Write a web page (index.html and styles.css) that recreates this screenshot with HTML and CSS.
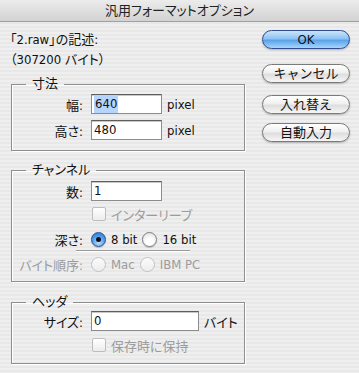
FILE: index.html
```html
<!DOCTYPE html>
<html lang="ja">
<head>
    <meta charset="UTF-8">
    <title>汎用フォーマットオプション</title>
    <link rel="stylesheet" href="styles.css">
</head>
<body>
    <div class="window">
        <div class="titlebar">汎用フォーマットオプション</div>

        <div class="content">
            <!-- left side: description and the three groups -->
            <div class="main">
                <p class="desc">「2.raw」の記述:<br>（307200 バイト）</p>

                <fieldset class="group group-size">
                    <legend>寸法</legend>
                    <div class="row">
                        <span class="label">幅:</span>
                        <span class="field field-short"><span class="selected">640</span></span>
                        <span class="unit">pixel</span>
                    </div>
                    <div class="row row-height">
                        <span class="label">高さ:</span>
                        <span class="field field-short">480</span>
                        <span class="unit">pixel</span>
                    </div>
                </fieldset>

                <fieldset class="group group-channel">
                    <legend>チャンネル</legend>
                    <div class="row">
                        <span class="label">数:</span>
                        <span class="field field-short">1</span>
                    </div>
                    <div class="row row-interleave disabled">
                        <span class="label"></span>
                        <span class="check"></span>
                        <span class="opt-text">インターリーブ</span>
                    </div>
                    <div class="row row-depth">
                        <span class="label">深さ:</span>
                        <span class="radio on"></span>
                        <span class="opt-text">8 bit</span>
                        <span class="radio"></span>
                        <span class="opt-text">16 bit</span>
                    </div>
                    <div class="separator"></div>
                    <div class="row row-order disabled">
                        <span class="label">バイト順序:</span>
                        <span class="radio"></span>
                        <span class="opt-text">Mac</span>
                        <span class="radio"></span>
                        <span class="opt-text">IBM PC</span>
                    </div>
                </fieldset>

                <fieldset class="group group-header">
                    <legend>ヘッダ</legend>
                    <div class="row">
                        <span class="label">サイズ:</span>
                        <span class="field field-long">0</span>
                        <span class="unit">バイト</span>
                    </div>
                    <div class="row row-keep disabled">
                        <span class="label"></span>
                        <span class="check"></span>
                        <span class="opt-text">保存時に保持</span>
                    </div>
                </fieldset>
            </div>

            <!-- right side: buttons -->
            <div class="buttons">
                <button class="aqua default">OK</button>
                <button class="aqua btn-cancel">キャンセル</button>
                <button class="aqua btn-swap">入れ替え</button>
                <button class="aqua btn-auto">自動入力</button>
            </div>
        </div>
    </div>
</body>
</html>
```

FILE: styles.css
```css
body {
    margin: 0;
    font-family: "DejaVu Sans Condensed", "DejaVu Sans", "Noto Sans CJK JP", sans-serif;
    font-size: 13px;
    font-feature-settings: "palt";
    color: #111;
}

.window {
    width: 359px;
    height: 373px;
    overflow: hidden;
    background: repeating-linear-gradient(#efefef 0, #efefef 2px, #e8e8e8 2px, #e8e8e8 4px);
}

.titlebar {
    height: 21px;
    line-height: 21px;
    text-align: center;
    font-size: 13px;
    color: #222;
    background: linear-gradient(#ececec, #d2d2d2);
    border-bottom: 1px solid #a0a0a0;
}

.content {
    display: flex;
}

.main {
    width: 234px;
    padding-left: 11px;
}

.desc {
    margin: 8px 0 0;
    line-height: 20px;
    margin-left: -1px;
}

/* group boxes */
.group {
    margin: 6px 0 0;
    padding: 2px 0 10px;
    border: 1px solid #8e8e8e;
    box-shadow: inset 1px 1px 0 #fff, 1px 1px 0 #fff;
}

.group legend {
    margin-left: 14px;
    padding: 0 6px;
    line-height: 16px;
    font-size: 13px;
}

.group-channel {
    margin-top: 11px;
    padding: 3px 0 7px;
}

.group-header {
    margin-top: 12px;
    padding: 1px 0 8px;
}

.row {
    display: flex;
    align-items: center;
    height: 20px;
}

.row-height { margin-top: 6px; }
.row-interleave { margin-top: 3px; }
.row-depth { margin-top: 5px; }
.row-order { margin-top: 2px; }
.row-keep { margin-top: 4px; }

.label {
    width: 71px;
    margin-right: 8px;
    text-align: right;
    flex-shrink: 0;
}

.disabled {
    color: #9c9c9c;
}

.field {
    box-sizing: border-box;
    height: 20px;
    line-height: 17px;
    padding-left: 2px;
    background: #fff;
    border: 1px solid #8c8c8c;
    border-top-color: #5e5e5e;
    box-shadow: inset 0 1px 0 #c8c8c8;
}

.field-short { width: 71px; }
.field-long { width: 108px; }

.selected {
    background: #b5d5ff;
    padding: 1px 1px 2px;
}

.unit {
    margin-left: 5px;
}

.separator {
    height: 1px;
    margin: 1px 0 0 64px;
    width: 114px;
    background: #9a9a9a;
    border-bottom: 1px solid #fff;
}

/* check boxes and radio buttons */
.check {
    box-sizing: border-box;
    width: 14px;
    height: 14px;
    margin-left: 1px;
    border: 1px solid #bdbdbd;
    border-radius: 2px;
    background: linear-gradient(#ffffff, #ececec);
}

.radio {
    box-sizing: border-box;
    width: 15px;
    height: 15px;
    border-radius: 50%;
    border: 1px solid #7d7d7d;
    background: radial-gradient(circle at 50% 70%, #ffffff 30%, #dcdcdc 100%);
    box-shadow: 0 1px 1px rgba(0, 0, 0, 0.2);
    position: relative;
}

.radio.on {
    border-color: #2d4f8f;
    background: radial-gradient(circle at 50% 75%, #b8ddff 0%, #4d9cf0 55%, #2c6fc9 100%);
}

.radio.on::after {
    content: "";
    position: absolute;
    left: 4px;
    top: 4px;
    width: 5px;
    height: 5px;
    border-radius: 50%;
    background: #111;
}

.disabled .radio {
    border-color: #c2c2c2;
    background: linear-gradient(#fbfbfb, #ededed);
    box-shadow: none;
}

.opt-text {
    margin-left: 5px;
    margin-right: 5px;
}

/* aqua buttons */
.buttons {
    display: flex;
    flex-direction: column;
    margin-left: 17px;
    padding-top: 8px;
}

.aqua {
    width: 88px;
    height: 19px;
    padding: 0;
    font-family: inherit;
    font-size: 13px;
    line-height: 17px;
    color: #111;
    border: 1px solid #7a7a7a;
    border-radius: 10px;
    background: linear-gradient(#ffffff 0%, #f0f0f0 45%, #dedede 55%, #f6f6f6 100%);
    box-shadow: 0 1px 2px rgba(0, 0, 0, 0.25);
}

.aqua.default {
    border-color: #2f4c8c;
    background: linear-gradient(#cbe5fb 0%, #8ec3f4 45%, #5aa2ea 55%, #a7d6fc 100%);
}

.btn-cancel { margin-top: 15px; }
.btn-swap { margin-top: 12px; }
.btn-auto { margin-top: 9px; }
```
